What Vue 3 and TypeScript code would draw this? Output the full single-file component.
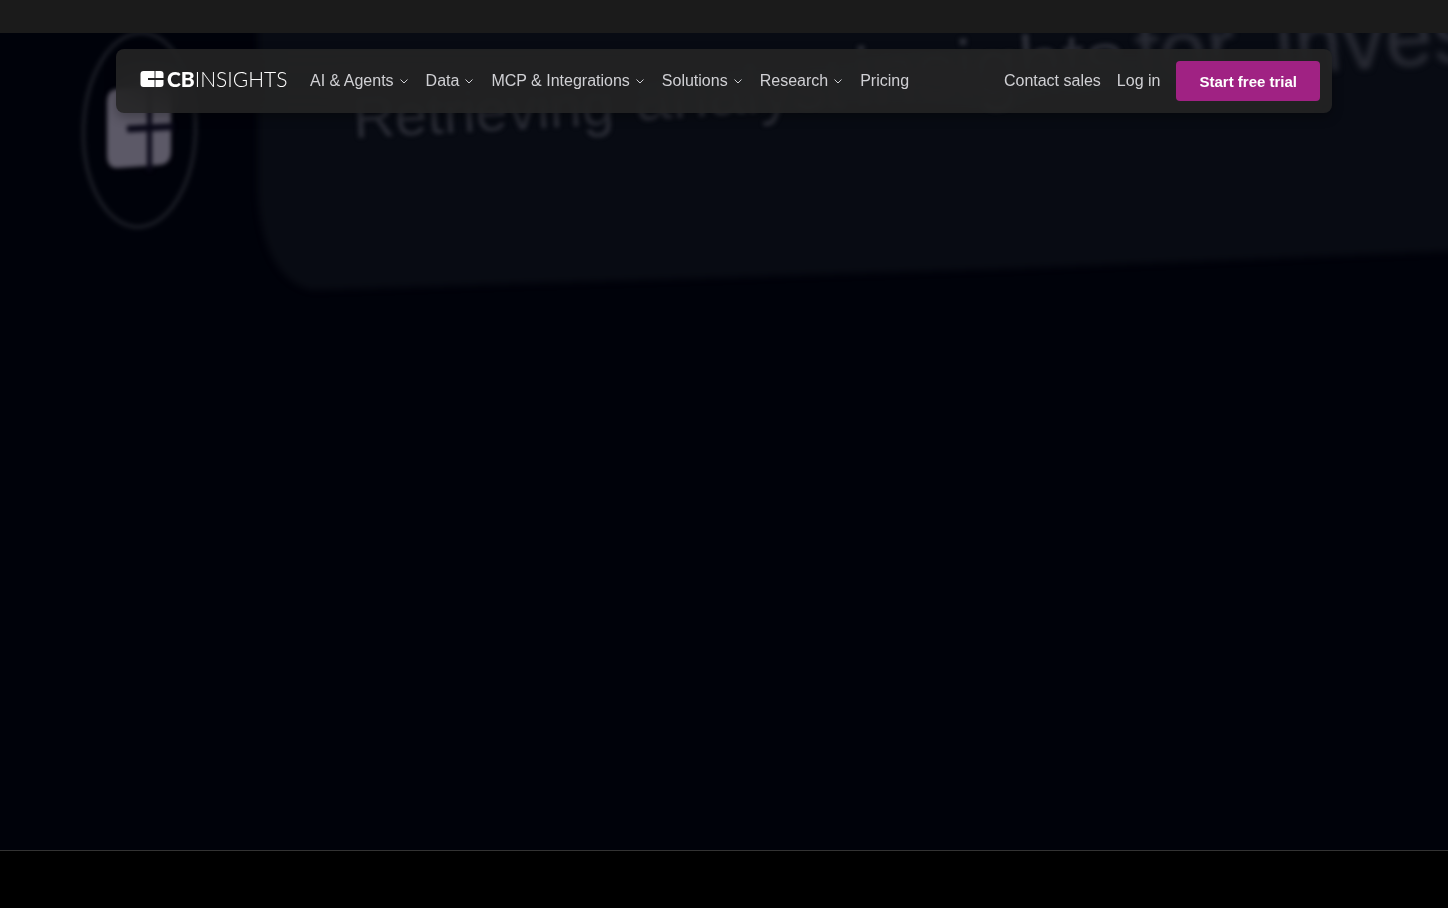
<script setup lang="ts">
interface NavItem {
  label: string
  menu: boolean
}

const items: NavItem[] = [
  { label: 'AI & Agents', menu: true },
  { label: 'Data', menu: true },
  { label: 'MCP & Integrations', menu: true },
  { label: 'Solutions', menu: true },
  { label: 'Research', menu: true },
  { label: 'Pricing', menu: false },
]
</script>

<template>
  <div class="page">
    <div class="topbar"></div>

    <main class="hero">
      <svg class="backdrop" viewBox="0 0 1448 817" preserveAspectRatio="xMinYMin slice" aria-hidden="true">
        <defs>
          <filter id="soft" x="-10%" y="-20%" width="120%" height="140%" color-interpolation-filters="sRGB">
            <feGaussianBlur stdDeviation="2" />
          </filter>
          <filter id="softer" x="-10%" y="-20%" width="120%" height="140%" color-interpolation-filters="sRGB">
            <feGaussianBlur stdDeviation="3" />
          </filter>
        </defs>
        <path
          class="panel"
          filter="url(#softer)"
          d="M258 -40 V160 C260 212 278 250 312 257 L1000 236 L1480 217 V-40 Z"
        />
        <ellipse class="ring" cx="139.500" cy="97" rx="56" ry="97" transform="rotate(1.500 139.500 97)" filter="url(#soft)" />
        <g filter="url(#soft)">
          <path
            class="tile"
            d="M107 70 Q107 56 118 56 L160 53 Q171 53 171 66 V118 Q171 131 160 132 L117 135 Q107 135 107 122 Z"
          />
          <path class="slot" d="M127 96 L174 93.500" stroke-width="7" />
          <path class="slot" d="M149.500 50 V138" stroke-width="5" />
        </g>
        <g class="ghost" filter="url(#soft)">
          <text font-size="58" transform="translate(354 105) rotate(-3)">Retrieving</text>
          <text font-size="66" transform="translate(636 88) rotate(-4)">analyst</text>
          <text font-size="80" transform="translate(856 71) rotate(-4)">insights</text>
        </g>
        <g class="ghost" filter="url(#softer)">
          <text font-size="86" transform="translate(1137 50) rotate(-4)">for</text>
          <text font-size="86" transform="translate(1277 42) rotate(-4)">inves</text>
        </g>
      </svg>

      <header class="navbar">
        <a class="brand" href="#" aria-label="CB Insights">
          <svg class="mark" viewBox="0 0 24 16" aria-hidden="true">
            <path d="M3.500 0 H14.500 V7 H8 V9 H14.500 V16 H3.500 Q0.500 16 0.500 13 V3 Q0.500 0 3.500 0 Z" />
            <path d="M15.500 0 H20.500 Q23.500 0 23.500 3 V7 H15.500 Z" />
            <path d="M15.500 9 H23.500 V13 Q23.500 16 20.500 16 H15.500 Z" />
          </svg>
          <span class="wordmark"><b>CB</b>INSIGHTS</span>
        </a>
        <nav class="links" aria-label="Main">
          <template v-for="item in items" :key="item.label">
            <button v-if="item.menu" class="link" type="button" aria-haspopup="true">
              {{ item.label }}
              <svg class="chevron" viewBox="0 0 12 12" aria-hidden="true">
                <path d="M2.500 4.500 L6 8 L9.500 4.500" />
              </svg>
            </button>
            <a v-else class="link" href="#">{{ item.label }}</a>
          </template>
        </nav>
        <div class="actions">
          <a class="link" href="#">Contact sales</a>
          <a class="link" href="#">Log in</a>
          <button class="cta" type="button">Start free trial</button>
        </div>
      </header>
    </main>

    <footer class="bottom"></footer>
  </div>
</template>

<style>
body {
  margin: 0;
  background: #000;
}
</style>

<style scoped>
.page {
  display: flex;
  flex-direction: column;
  min-height: 100vh;
  background: #000;
  font-family: "Liberation Sans", Arial, sans-serif;
}

.topbar {
  height: 33px;
  background: #1b1b1b;
}

.hero {
  position: relative;
  flex: 1;
  overflow: hidden;
  background: #00020a;
}

.backdrop {
  position: absolute;
  inset: 0;
  width: 100%;
  height: 100%;
}

.panel {
  fill: #080b13;
}

.ring {
  fill: none;
  stroke: #1a1c24;
  stroke-width: 4px;
}

.tile {
  fill: #5c5967;
}

.slot {
  fill: none;
  stroke: #0a0918;
}

.ghost {
  fill: #2a2c35;
  font-family: "Liberation Sans", Arial, sans-serif;
}

.navbar {
  position: relative;
  display: flex;
  align-items: center;
  box-sizing: border-box;
  max-width: 1216px;
  min-height: 64px;
  margin: 16px auto;
  padding: 12px 12px 12px 24px;
  border-radius: 8px;
  background: rgba(36, 36, 36, 0.88);
  backdrop-filter: blur(20px);
  box-shadow: 0 4px 12px rgba(0, 0, 0, 0.3);
}

.brand {
  display: flex;
  align-items: center;
  gap: 3px;
  width: 146px;
  margin-right: 24px;
  padding-bottom: 4px;
  color: #fff;
  text-decoration: none;
}

.mark {
  flex: none;
  width: 24px;
  height: 16px;
  fill: #fff;
}

.wordmark {
  font-family: Lato, "Liberation Sans", sans-serif;
  font-size: 21px;
  font-weight: 300;
  line-height: 16px;
  white-space: nowrap;
}

.wordmark b {
  font-weight: 900;
}

.links,
.actions {
  display: flex;
  align-items: center;
  gap: 16px;
}

.actions {
  margin-left: auto;
}

.link {
  display: flex;
  align-items: center;
  gap: 4px;
  padding: 0;
  border: 0;
  background: none;
  color: #d0d0d4;
  font: inherit;
  font-size: 16px;
  line-height: 24px;
  text-decoration: none;
  white-space: nowrap;
  cursor: pointer;
}

.chevron {
  width: 12px;
  height: 12px;
  fill: none;
  stroke: #d0d0d4;
  stroke-width: 1px;
}

.cta {
  height: 40px;
  padding: 0 23px;
  border: 0;
  border-radius: 4px;
  background: #a02283;
  color: #fff;
  font: inherit;
  font-size: 15px;
  font-weight: 700;
  white-space: nowrap;
  cursor: pointer;
}

.bottom {
  height: 57px;
  border-top: 1px solid #333;
  background: #000;
}
</style>
